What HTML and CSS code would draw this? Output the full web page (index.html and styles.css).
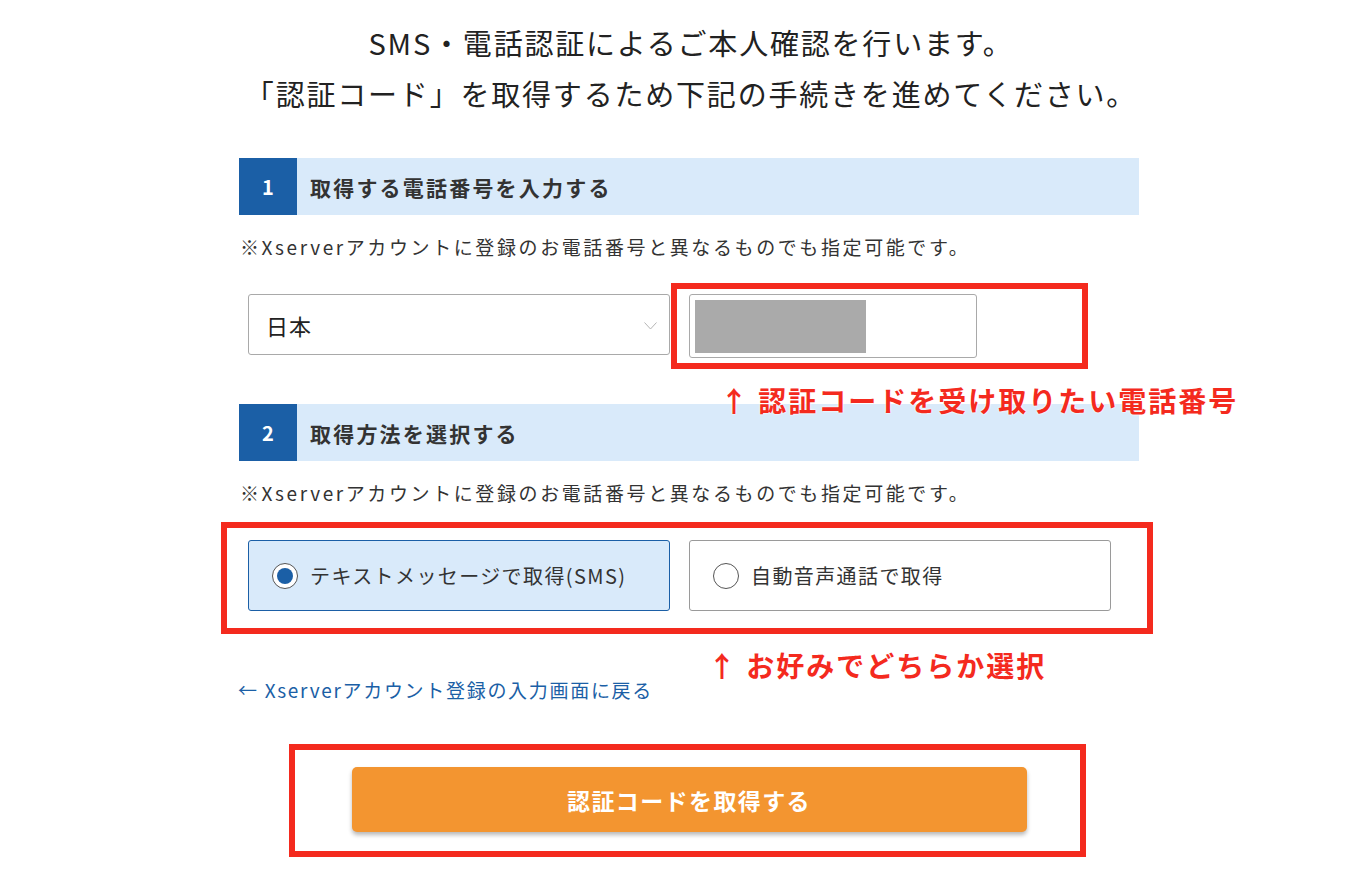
FILE: index.html
```html
<!DOCTYPE html>
<html lang="ja">
<head>
<meta charset="utf-8">
<title>SMS・電話認証</title>
<link rel="stylesheet" href="styles.css">
</head>
<body>
<div class="page">
  <h1 class="lead">SMS・電話認証によるご本人確認を行います。<br>「認証コード」を取得するため下記の手続きを進めてください。</h1>

  <section class="step step-first">
    <div class="step-head"><span class="step-num">1</span><span class="step-title">取得する電話番号を入力する</span></div>
    <p class="note">※Xserverアカウントに登録のお電話番号と異なるものでも指定可能です。</p>
    <div class="phone-row">
      <div class="select">
        <span class="select-value">日本</span>
        <svg class="chevron" width="13" height="8" viewBox="0 0 13 8"><polyline points="0.5,0.5 6.5,7 12.5,0.5" fill="none" stroke="#b5b5b5" stroke-width="1"/></svg>
      </div>
      <div class="phone-input"><span class="mask"></span></div>
    </div>
  </section>

  <section class="step step-second">
    <div class="step-head"><span class="step-num">2</span><span class="step-title">取得方法を選択する</span></div>
    <p class="note">※Xserverアカウントに登録のお電話番号と異なるものでも指定可能です。</p>
    <div class="method-row">
      <label class="method is-checked"><span class="radio"><span class="radio-dot"></span></span><span class="method-label">テキストメッセージで取得(SMS)</span></label>
      <label class="method"><span class="radio"></span><span class="method-label">自動音声通話で取得</span></label>
    </div>
  </section>

  <a class="back-link" href="#">← Xserverアカウント登録の入力画面に戻る</a>

  <div class="actions">
    <button class="submit" type="button">認証コードを取得する</button>
  </div>

  <div class="mark mark-phone"></div>
  <p class="callout callout-phone">↑ 認証コードを受け取りたい電話番号</p>
  <div class="mark mark-method"></div>
  <p class="callout callout-method">↑ お好みでどちらか選択</p>
  <div class="mark mark-submit"></div>
</div>
</body>
</html>
```

FILE: styles.css
```css
* { box-sizing: border-box; }

html, body {
  margin: 0;
  padding: 0;
  background: #ffffff;
}

body {
  font-family: "Noto Sans CJK JP", "Noto Sans", sans-serif;
  color: #333333;
}

.page {
  position: relative;
  width: 900px;
  margin-left: 239px;
  padding-top: 17px;
  padding-bottom: 40px;
}

.lead {
  margin: 0;
  font-size: 29px;
  font-weight: 400;
  line-height: 51px;
  letter-spacing: 1.8px;
  text-align: center;
  color: #222222;
  padding-left: 4px;
}

.step-first { margin-top: 39px; }
.step-second { margin-top: 46px; }

.step-head {
  display: flex;
  align-items: center;
  height: 57px;
  background: #d9eafa;
}

.step-num {
  display: flex;
  align-items: center;
  justify-content: center;
  width: 58px;
  height: 100%;
  background: #1b5fa6;
  color: #ffffff;
  font-weight: 700;
  font-size: 20px;
}

.step-title {
  margin-left: 13px;
  font-size: 21px;
  font-weight: 700;
  letter-spacing: 2.2px;
  color: #333333;
}

.note {
  margin: 20px 0 0 1px;
  font-size: 19px;
  line-height: 24px;
  letter-spacing: 2.6px;
  color: #333333;
}

.phone-row {
  display: flex;
  align-items: flex-start;
  gap: 19px;
  margin-top: 35px;
  margin-left: 9px;
}

.select {
  display: flex;
  align-items: center;
  justify-content: space-between;
  width: 422px;
  height: 61px;
  border: 1px solid #a9a9a9;
  border-radius: 3px;
  padding: 0 12px 0 17px;
}

.select-value {
  font-size: 22px;
  letter-spacing: 1px;
  color: #222222;
}

.chevron { display: block; margin-top: 2px; }

.phone-input {
  width: 288px;
  height: 64px;
  border: 1px solid #a9a9a9;
  border-radius: 3px;
  padding: 5px;
}

.mask {
  display: block;
  width: 171px;
  height: 53px;
  background: #aaaaaa;
}

.method-row {
  display: flex;
  gap: 19px;
  margin-top: 35px;
  margin-left: 9px;
}

.method {
  display: flex;
  align-items: center;
  width: 422px;
  height: 71px;
  border: 1px solid #9a9a9a;
  border-radius: 3px;
  padding-left: 23px;
  background: #ffffff;
}

.method.is-checked {
  background: #d9eafa;
  border-color: #1b5fa6;
}

.radio {
  display: flex;
  align-items: center;
  justify-content: center;
  width: 26px;
  height: 26px;
  border: 1px solid #555555;
  border-radius: 50%;
  background: #ffffff;
  flex: none;
}

.radio-dot {
  width: 16px;
  height: 16px;
  border-radius: 50%;
  background: #1b5fa6;
}

.method-label {
  margin-left: 12px;
  font-size: 20px;
  letter-spacing: 1.4px;
  color: #333333;
}

.back-link {
  display: block;
  margin-top: 67px;
  margin-left: -1px;
  font-size: 19px;
  line-height: 24px;
  letter-spacing: 1.7px;
  color: #1b5fa6;
  text-decoration: none;
}

.actions {
  display: flex;
  justify-content: center;
  margin-top: 65px;
}

.submit {
  width: 675px;
  height: 65px;
  border: 0;
  border-radius: 5px;
  background: #f39530;
  box-shadow: 0 3px 4px rgba(0, 0, 0, 0.28);
  color: #ffffff;
  font-family: "Noto Sans CJK JP", "Noto Sans", sans-serif;
  font-size: 23px;
  font-weight: 700;
  letter-spacing: 1.4px;
}

.mark {
  position: absolute;
  border: 6px solid #f42a1e;
  pointer-events: none;
}

.mark-phone { left: 432px; top: 283px; width: 417px; height: 86px; }
.mark-method { left: -18px; top: 522px; width: 932px; height: 112px; }
.mark-submit { left: 50px; top: 744px; width: 797px; height: 113px; }

.callout {
  position: absolute;
  margin: 0;
  font-size: 28px;
  font-weight: 700;
  line-height: 34px;
  letter-spacing: 2px;
  color: #f42a1e;
  white-space: nowrap;
  text-shadow: 0 0 2px #ffffff, 0 0 2px #ffffff;
}

.callout-phone { left: 481px; top: 383px; }
.callout-method { left: 469px; top: 648px; }
```
